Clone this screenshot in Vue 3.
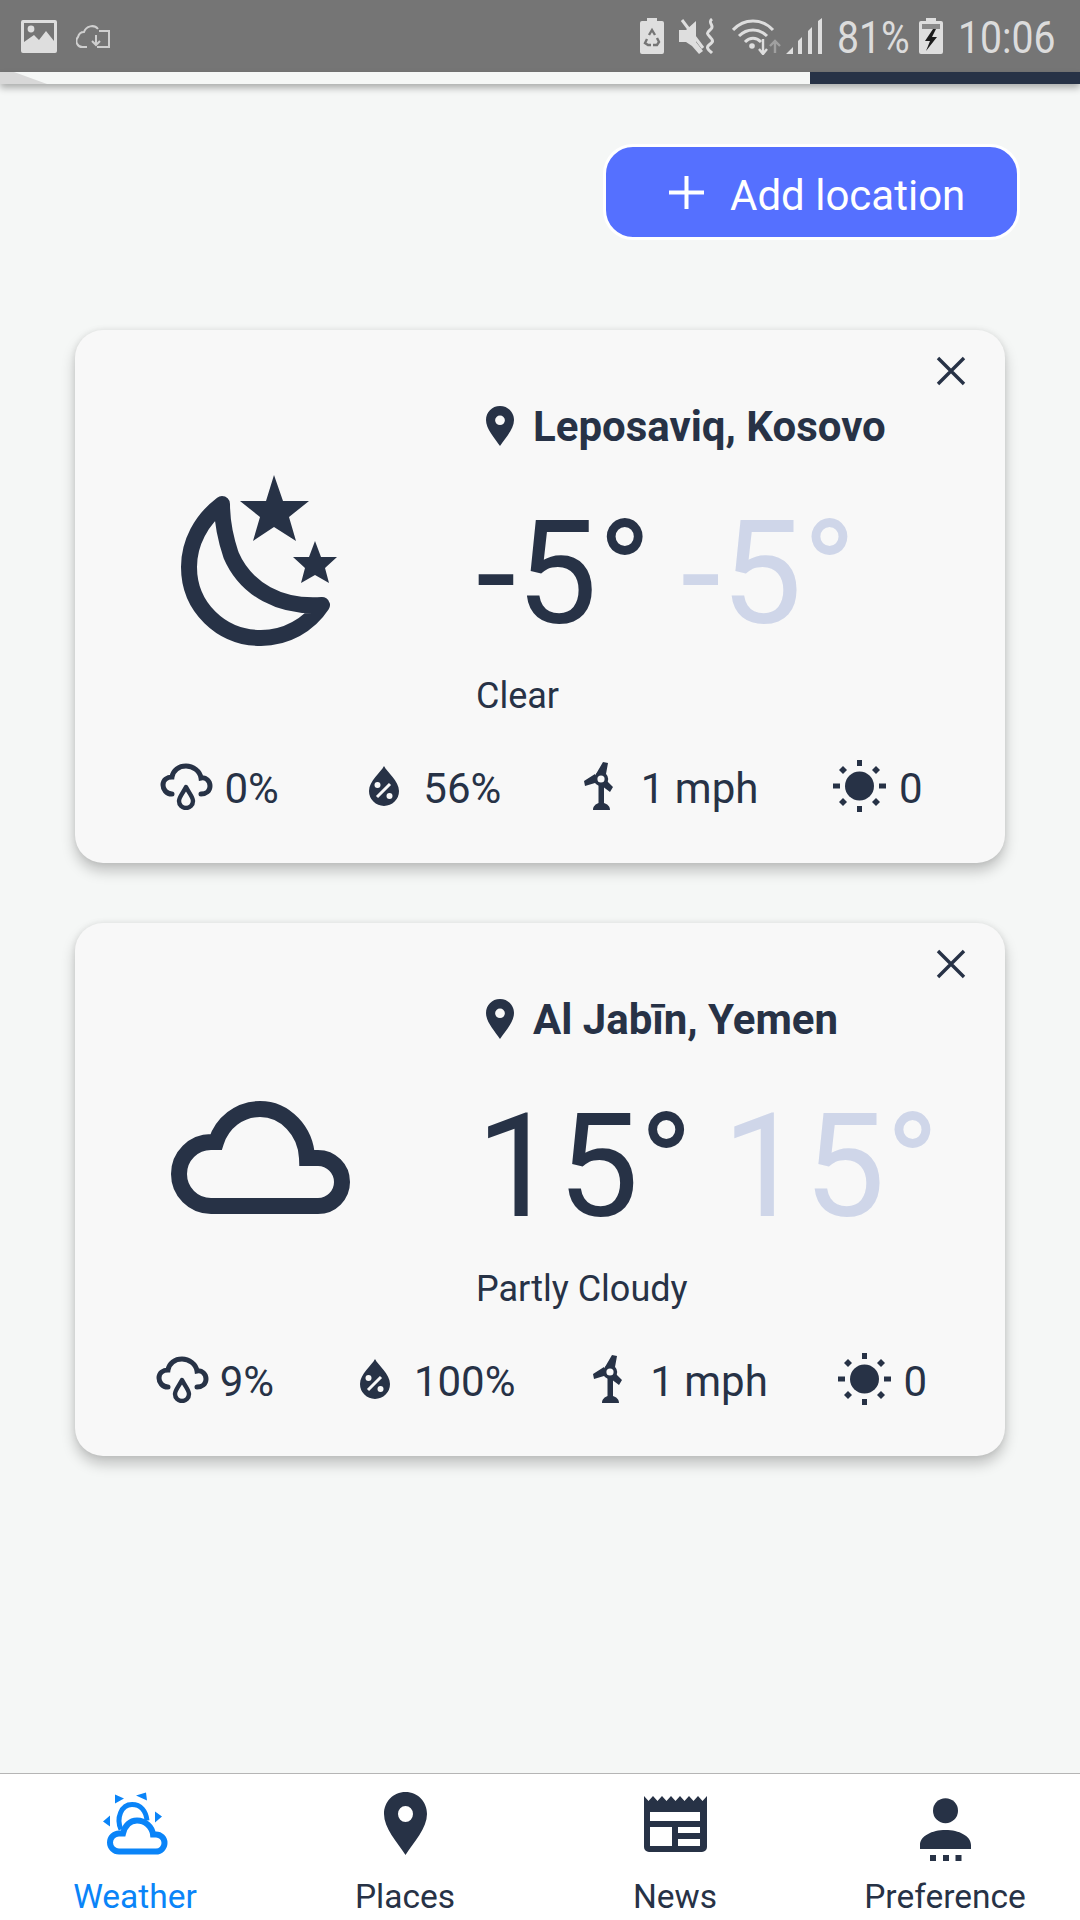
<template>
  <div class="page">
    <div class="status-bar">
      <div class="status-left">
        <svg class="ic-image" viewBox="0 0 36 33">
          <path fill-rule="evenodd" d="M2 0H34a2 2 0 0 1 2 2V31a2 2 0 0 1-2 2H2a2 2 0 0 1-2-2V2a2 2 0 0 1 2-2ZM3 22V3H33V21L25 11 18 20 13 15Z" fill="#dedede" />
          <circle cx="10" cy="9" r="3.4" fill="#dedede" />
        </svg>
        <svg class="ic-sync" viewBox="0 0 34 26" fill="none" stroke="#cfcfcf" stroke-width="2">
          <path d="M11 24H7A6 6 0 0 1 2 14 C3 10 6 9 8 9 C10 3 18 1 22 6" />
          <path d="M23 8H33V24H21" />
          <path d="M20 12V22M16 18l4 4 4-4" />
        </svg>
      </div>
      <div class="status-right">
        <svg class="ic-batt" viewBox="0 0 24 36">
          <path fill="#dedede" d="M7 0H17V3H22a2 2 0 0 1 2 2V34a2 2 0 0 1-2 2H2a2 2 0 0 1-2-2V5a2 2 0 0 1 2-2H7Z" />
          <path fill="none" stroke="#757575" stroke-width="2.4" d="M9 17l3-5 3 5M7 21l-2 4 3 2h3M13 27h4l2-3-2-4" />
        </svg>
        <svg class="ic-mute" viewBox="0 0 38 36">
          <path fill="#dedede" d="M0 12H7L17 3V24L24 33 20 36 13 28 7 24H0Z" />
          <path stroke="#dedede" stroke-width="3" d="M3 2 24 30" />
          <path fill="none" stroke="#dedede" stroke-width="3" d="M33 1c-5 4 3 6-1 10s-5 4-1 8 3 5-1 8 1 6 3 8" />
        </svg>
        <svg class="ic-wifi" viewBox="0 0 49 37" fill="none">
          <g stroke="#dedede" stroke-width="3">
            <path d="M1 12C12 0 30 0 41 12" />
            <path d="M7 18C15 10 27 10 35 18" />
            <path d="M13 24C18 19 24 19 29 24" />
          </g>
          <circle cx="20" cy="28" r="2.8" fill="#dedede" />
          <path d="M31 21V36M27 31l4 5 4-5" stroke="#dedede" stroke-width="2.4" />
          <path d="M43 35V24M38 28l5-5 5 5" stroke="#a0a0a0" stroke-width="2.4" />
        </svg>
        <svg class="ic-signal" viewBox="0 0 36 36">
          <path fill="#dedede" d="M0 36 7 29V36ZM12 36V23L16 19V36ZM22 36V13L26 9V36ZM32 36V3L36 0V36Z" />
        </svg>
        <span class="status-pct">81%</span>
        <svg class="ic-batt" viewBox="0 0 24 36">
          <path fill="#dedede" d="M7 0H17V3H22a2 2 0 0 1 2 2V34a2 2 0 0 1-2 2H2a2 2 0 0 1-2-2V5a2 2 0 0 1 2-2H7Z" />
          <rect x="3" y="6" width="18" height="5" fill="#8a8a8a" />
          <path fill="#1c1c1c" d="M14 11 6 23H11L7 33 18 19H13L17 11Z" />
        </svg>
        <span class="status-time">10:06</span>
      </div>
    </div>

    <div class="strip">
      <div class="strip-corner"></div>
      <div class="strip-dark"></div>
    </div>

    <main class="content">
      <div class="actions">
        <button class="add-btn">
          <svg class="ic-plus" viewBox="0 0 35 33">
            <path d="M17.5 0V33M0 16.5H35" stroke="#fff" stroke-width="4" />
          </svg>
          <span class="add-label">Add location</span>
        </button>
      </div>

      <section v-for="loc in locations" :key="loc.name" class="card">
        <svg class="close" viewBox="0 0 30 30">
          <path d="M2 2 28 28M28 2 2 28" stroke="#273246" stroke-width="3.4" />
        </svg>

        <div class="card-top">
          <div class="card-icon">
            <svg v-if="loc.icon === 'moon'" class="ic-moon" viewBox="0 0 156 172">
              <path d="M41 29C20 45 8 68 8 92C8 132 40 163 80 163C105 163 128 150 141 130C100 133 65 115 50 80C44 62 41 45 41 29Z" fill="none" stroke="#273246" stroke-width="16" stroke-linejoin="round" />
              <path fill="#273246" d="M93 0 102 26H128L108 42 115 66 93 52 72 66 79 42 59 26H85Z" />
              <path fill="#273246" d="M134 66 140 82H156L144 93 148 108 134 100 120 108 124 93 112 82H128Z" />
            </svg>
            <svg v-else class="ic-cloud" viewBox="0 0 179 113">
              <path d="M40 105H147A24 24 0 0 0 147 57H136C135 30 114 8 89 8C68 8 51 22 45 41H40A32 32 0 0 0 40 105Z" fill="none" stroke="#273246" stroke-width="16" />
            </svg>
          </div>

          <div class="card-main">
            <div class="place">
              <svg class="ic-pin" viewBox="0 0 43 63" preserveAspectRatio="none">
                <path fill-rule="evenodd" fill="#273246" d="M21.5 0C34 0 43 10 43 22C43 36 30 50 21.5 63C13 50 0 36 0 22C0 10 9 0 21.5 0ZM21.5 15a7.5 7.5 0 1 0 0 15a7.5 7.5 0 1 0 0-15Z" />
              </svg>
              <span>{{ loc.name }}</span>
            </div>
            <div class="temps">
              <span>{{ loc.temp }}°</span>
              <span class="feels">{{ loc.temp }}°</span>
            </div>
            <div class="condition">{{ loc.condition }}</div>
          </div>
        </div>

        <div class="stats">
          <div class="stat gap-rain">
            <svg class="ic-rain" viewBox="0 0 53 47" fill="none" stroke="#273246" stroke-width="5" stroke-linecap="round">
              <path d="M12 31C6 31 3 26 3 22C3 17 7 14 12 14C13 7 19 3 26 3C33 3 40 8 41 15C46 14 50 18 50 23C50 28 46 31 41 31" />
              <path d="M26 24C29 30 33 34 33 38A7 7 0 0 1 19 38C19 34 23 30 26 24Z" stroke-width="4.4" stroke-linejoin="round" />
            </svg>
            <span>{{ loc.rain }}</span>
          </div>
          <div class="stat gap-wide">
            <svg class="ic-drop" viewBox="0 0 30 40">
              <path fill="#273246" d="M15 0C18 6 30 15 30 25A15 15 0 0 1 0 25C0 15 12 6 15 0Z" />
              <circle cx="8.5" cy="19" r="3" fill="#f8f8f8" />
              <circle cx="20.5" cy="30" r="3" fill="#f8f8f8" />
              <path d="M8 31 21 18" stroke="#f8f8f8" stroke-width="3" />
            </svg>
            <span>{{ loc.humidity }}</span>
          </div>
          <div class="stat gap-wind">
            <svg class="ic-wind" viewBox="0 0 29 48">
              <path fill="#273246" d="M14.500 22H20V41C23 42 26 44 26 48H9C9 44 12 42 14.500 41Z" />
              <path fill="#273246" d="M12 12 19 0 24 1 22 12ZM11 21 1 24 0 19 11 12ZM23 19 29 25 26 30 18 24Z" />
              <circle cx="17" cy="17" r="5.400" fill="#f8f8f8" stroke="#273246" stroke-width="3.600" />
            </svg>
            <span>{{ loc.wind }}</span>
          </div>
          <div class="stat gap-sun">
            <svg class="ic-sun" viewBox="0 0 53 52">
              <circle cx="26.5" cy="26" r="14.5" fill="#273246" />
              <path fill="#273246" d="M24 0H29V6H24ZM24 46H29V52H24ZM0 23.5H7V28.5H0ZM46 23.5H53V28.5H46ZM10 6l4 4-4 4-4-4ZM43 6l4 4-4 4-4-4ZM10 38l4 4-4 4-4-4ZM43 38l4 4-4 4-4-4Z" />
            </svg>
            <span>{{ loc.uv }}</span>
          </div>
        </div>
      </section>
    </main>

    <nav class="tabs">
      <div class="tab active">
        <svg class="tab-icon" width="65" height="62" viewBox="0 0 65 62">
          <path fill="none" stroke="#0a84f8" stroke-width="5" d="M18 37C13 26 18 12 29 12C38 12 43 19 44 28" />
          <path fill="none" stroke="#0a84f8" stroke-width="6" d="M16 59H53A8.500 8.500 0 0 0 53 42H50C49 34 42 28 34 28C27 28 22 33 20 41H16A9 9 0 0 0 16 59Z" />
          <path fill="#0a84f8" d="M12 2 21 6 12 11ZM33 3 43 0 44 8ZM52 19 59 24 52 30ZM0 29 7 23V34Z" />
        </svg>
        <span>Weather</span>
      </div>
      <div class="tab">
        <svg class="tab-icon" width="43" height="63" viewBox="0 0 43 63">
          <path fill-rule="evenodd" fill="#273246" d="M21.5 0C34 0 43 10 43 22C43 36 30 50 21.5 63C13 50 0 36 0 22C0 10 9 0 21.5 0ZM21.5 14a7.500 8 0 1 0 0 16a7.500 8 0 1 0 0-16Z" />
        </svg>
        <span>Places</span>
      </div>
      <div class="tab">
        <svg class="tab-icon news" width="63" height="56" viewBox="0 0 63 56">
          <path fill-rule="evenodd" fill="#273246" d="M0 0L4.500 5 9 0 13.500 5 18 0 22.500 5 27 0 31.500 5 36 0 40.500 5 45 0 49.500 5 54 0 58.500 5 63 0V51a5 5 0 0 1-5 5H5a5 5 0 0 1-5-5ZM6 16V25H56V16ZM6 31V50H28V31ZM34 31V37H56V31ZM34 43V50H56V43Z" />
        </svg>
        <span>News</span>
      </div>
      <div class="tab">
        <svg class="tab-icon person" width="51" height="64" viewBox="0 0 51 64">
          <circle cx="25.500" cy="12.700" r="12.500" fill="#273246" />
          <path fill="#273246" d="M0 51V47C0 38 12 32 25.500 32C39 32 51 38 51 47V51ZM10 57H16V63H10ZM23 57H29V63H23ZM35.500 57H41.500V63H35.500Z" />
        </svg>
        <span>Preference</span>
      </div>
    </nav>
  </div>
</template>

<script setup>
const locations = [
  {
    name: 'Leposaviq, Kosovo',
    icon: 'moon',
    temp: '-5',
    condition: 'Clear',
    rain: '0%',
    humidity: '56%',
    wind: '1 mph',
    uv: '0'
  },
  {
    name: 'Al Jabīn, Yemen',
    icon: 'cloud',
    temp: '15',
    condition: 'Partly Cloudy',
    rain: '9%',
    humidity: '100%',
    wind: '1 mph',
    uv: '0'
  }
];
</script>

<style>
html, body {
  margin: 0;
  background: #f5f7f6;
}
</style>

<style scoped>
.page {
  width: 1080px;
  height: 1920px;
  display: flex;
  flex-direction: column;
  overflow: hidden;
  background: #f5f7f6;
  color: #273246;
  font-family: Roboto, "Liberation Sans", sans-serif;
}

svg {
  display: block;
  flex: none;
}

.status-bar {
  height: 72px;
  flex: none;
  display: flex;
  justify-content: space-between;
  align-items: center;
  background: #757575;
  color: #dcdcdc;
}

.status-left {
  display: flex;
  align-items: center;
  gap: 19px;
  padding-left: 21px;
}

.ic-image { width: 36px; height: 33px; }
.ic-sync { width: 34px; height: 26px; }

.status-right {
  display: flex;
  align-items: center;
  gap: 15px;
  padding-right: 26px;
}

.ic-batt { width: 24px; height: 36px; }
.ic-mute { width: 38px; height: 36px; }
.ic-wifi { width: 49px; height: 37px; }
.ic-signal { width: 36px; height: 36px; margin-left: -10px; }

.status-pct,
.status-time {
  padding-top: 3px;
  font-size: 45px;
  line-height: 69px;
  white-space: nowrap;
  transform-origin: left center;
  transform: scaleX(0.87);
}

.status-pct { width: 67px; }
.status-time { width: 96px; }

.strip {
  height: 12px;
  flex: none;
  position: relative;
  display: flex;
  justify-content: flex-end;
  background: #f5f7f6;
  box-shadow: 0 4px 7px rgba(0, 0, 0, 0.3);
}

.strip-corner {
  position: absolute;
  left: 0;
  top: 0;
  width: 48px;
  height: 12px;
  background: #d8d8d8;
  clip-path: polygon(0 0, 14px 0, 47px 12px, 0 12px);
}

.strip-dark {
  width: 270px;
  background: #273246;
}

.content {
  flex: 1;
  padding: 60px 75px 0;
  display: flex;
  flex-direction: column;
  gap: 60px;
}

.actions {
  display: flex;
  justify-content: flex-end;
  margin-right: -15px;
  margin-bottom: 30px;
}

.add-btn {
  width: 417px;
  height: 96px;
  box-sizing: border-box;
  display: flex;
  align-items: center;
  gap: 26px;
  padding: 0 0 0 63px;
  border: 3px solid #fff;
  border-radius: 30px;
  background: #5570ff;
  color: #fff;
  font-family: inherit;
  font-size: 42px;
}

.add-label {
  margin-top: 6px;
}

.ic-plus {
  width: 35px;
  height: 33px;
}

.card {
  position: relative;
  height: 533px;
  box-sizing: border-box;
  padding-top: 72px;
  border-radius: 28px;
  background: #f8f8f8;
  box-shadow: 0 8px 14px rgba(0, 0, 0, 0.22), 0 0 6px rgba(0, 0, 0, 0.08);
}

.close {
  position: absolute;
  top: 26px;
  right: 39px;
  width: 30px;
  height: 30px;
}

.card-top {
  display: flex;
  align-items: center;
}

.card-icon {
  width: 370px;
  margin-right: 31px;
  display: flex;
  justify-content: center;
}

.ic-moon { width: 156px; height: 172px; margin-top: 2px; margin-right: 3px; }
.ic-cloud { width: 179px; height: 113px; margin-top: 8px; }

.place {
  display: flex;
  align-items: center;
  gap: 19px;
  height: 48px;
  padding-left: 10px;
  font-size: 42px;
  font-weight: 700;
}

.ic-pin {
  width: 28px;
  height: 40px;
}

.temps {
  display: flex;
  gap: 29px;
  margin-top: 48px;
  font-size: 145px;
  font-weight: 400;
  line-height: 150px;
  white-space: nowrap;
}

.feels {
  color: #cfd6e9;
}

.condition {
  margin-top: 26px;
  font-size: 36px;
  line-height: 44px;
}

.stats {
  display: flex;
  justify-content: space-evenly;
  align-items: center;
  height: 52px;
  margin-top: 42px;
  padding-left: 3px;
  font-size: 42px;
}

.stat {
  display: flex;
  align-items: center;
}

.stat span {
  margin-top: 5px;
}

.gap-rain { gap: 11px; margin-right: 8px; }
.gap-wide { gap: 24px; }
.gap-wind { gap: 28px; }
.gap-sun { gap: 13px; margin-left: -8px; }

.ic-rain { width: 53px; height: 47px; }
.ic-drop { width: 30px; height: 40px; }
.ic-wind { width: 29px; height: 48px; }
.ic-sun { width: 53px; height: 52px; }

.tabs {
  height: 147px;
  flex: none;
  box-sizing: border-box;
  display: grid;
  grid-template-columns: repeat(4, 1fr);
  border-top: 1px solid #b5b5b5;
  background: #fff;
}

.tab {
  display: flex;
  flex-direction: column;
  align-items: center;
  padding-top: 18px;
  font-size: 33.5px;
  line-height: 40px;
}

.tab-icon {
  height: 63px;
  margin-bottom: 22px;
}

.tab-icon.news {
  height: 56px;
  margin-top: 4px;
  margin-bottom: 25px;
}

.tab-icon.person {
  height: 64px;
  margin-top: 6px;
  margin-bottom: 15px;
}

.tab.active {
  color: #0a84f8;
}
</style>
